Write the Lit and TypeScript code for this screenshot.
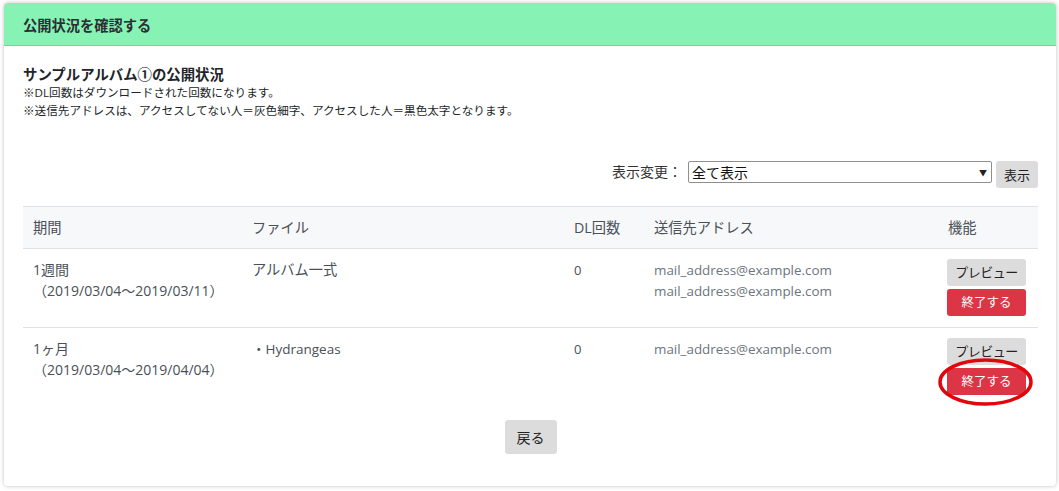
import { LitElement, html, css } from "lit";
import { customElement } from "lit/decorators.js";

@customElement("app-root")
export class AppRoot extends LitElement {
  static styles = css`
    :host {
      display: block;
      width: 1059px;
      height: 491px;
      overflow: hidden;
      background: #fff;
      font-family: "Open Sans", "Noto Sans CJK JP", sans-serif;
      font-size: 13px;
      color: #212529;
      box-sizing: border-box;
      padding: 3px 3px 4px 4px;
    }
    * { box-sizing: border-box; }
    .card {
      height: 483px;
      background: #fff;
      border-radius: 4px;
      box-shadow: 0 0 4px rgba(0, 0, 0, 0.25);
      position: relative;
      overflow: hidden;
    }
    .head {
      height: 43px;
      background: #86f3b5;
      border-bottom: 1px solid #6fd39b;
      padding: 0 19px;
      display: flex;
      align-items: center;
      font-size: 14.25px;
      font-weight: 700;
      color: #2b2f33;
    }
    .body { padding: 20px 18px 0 19px; }
    .title { font-size: 14.4px; font-weight: 700; line-height: 17px; color: #212529; }
    .note { font-size: 11.6px; line-height: 17px; color: #212529; padding-top: 1px; }
    .filter {
      margin-top: 42px;
      display: flex;
      justify-content: flex-end;
      align-items: flex-start;
      height: 45px;
    }
    .filter label { font-size: 14px; line-height: 22px; margin-right: 6px; color: #333; }
    .select {
      width: 304px;
      height: 22px;
      border: 1px solid #8f8f8f;
      border-radius: 2px;
      background: #fff;
      display: flex;
      align-items: center;
      justify-content: space-between;
      padding: 0 4px 0 3px;
      font-size: 14px;
      color: #111;
      margin-right: 4px;
    }
    .caret { font-size: 8px; color: #222; }
    .btn {
      display: flex;
      align-items: center;
      justify-content: center;
      background: #dcdcdc;
      border-radius: 3px;
      font-size: 13px;
      color: #222;
    }
    .show { width: 42px; height: 27px; }
    table {
      width: 1015px;
      border-collapse: collapse;
      table-layout: fixed;
      font-size: 14px;
    }
    th, td {
      padding: 10px 10px;
      text-align: left;
      vertical-align: top;
      font-weight: 400;
      line-height: 21px;
      color: #495057;
    }
    thead tr { background: #f7f8fa; border-top: 1px solid #dee2e6; border-bottom: 1px solid #dee2e6; }
    th { height: 42px; padding: 10px 10px 10px; font-size: 14.25px; }
    tbody tr { border-bottom: 1px solid #dee2e6; }
    tbody tr:last-child { border-bottom: 0; }
    tbody tr { height: 79px; }
    .file { font-size: 14.25px; }
    .hyd { font-size: 13.5px; padding-top: 11px; }
    .mail { color: #6c757d; font-size: 13.4px; padding-top: 11px; }
    .num { font-size: 13px; padding-top: 11px; }
    .ops { padding: 10px 0 0 9px; }
    .ops .btn { width: 79px; height: 27px; }
    .ops .btn + .btn { margin-top: 3px; }
    .prev { font-size: 13px; letter-spacing: -0.5px; }
    .end { background: #dc3545; color: #fff; font-size: 12.5px; }
    .foot { display: flex; justify-content: center; margin-top: 13px; }
    .back { width: 52px; height: 34px; font-size: 14px; }
    .ring {
      position: absolute;
      left: 934px;
      top: 355px;
      width: 95px;
      height: 48px;
      pointer-events: none;
    }
  `;

  render() {
    return html`
      <div class="card">
        <div class="head">公開状況を確認する</div>
        <div class="body">
          <div class="title">サンプルアルバム①の公開状況</div>
          <div class="note">※DL回数はダウンロードされた回数になります。</div>
          <div class="note">※送信先アドレスは、アクセスしてない人＝灰色細字、アクセスした人＝黒色太字となります。</div>
          <div class="filter">
            <label>表示変更：</label>
            <div class="select"><span>全て表示</span><span class="caret">▼</span></div>
            <div class="btn show">表示</div>
          </div>
          <table>
            <colgroup>
              <col style="width:219px" /><col style="width:322px" /><col style="width:80px" />
              <col style="width:294px" /><col style="width:100px" />
            </colgroup>
            <thead>
              <tr><th>期間</th><th>ファイル</th><th>DL回数</th><th>送信先アドレス</th><th>機能</th></tr>
            </thead>
            <tbody>
              <tr>
                <td>1週間<br />（2019/03/04～2019/03/11）</td>
                <td class="file">アルバム一式</td>
                <td class="num">0</td>
                <td class="mail">mail_address@example.com<br />mail_address@example.com</td>
                <td class="ops"><div class="btn prev">プレビュー</div><div class="btn end">終了する</div></td>
              </tr>
              <tr>
                <td>1ヶ月<br />（2019/03/04～2019/04/04）</td>
                <td class="hyd">・Hydrangeas</td>
                <td class="num">0</td>
                <td class="mail">mail_address@example.com</td>
                <td class="ops"><div class="btn prev">プレビュー</div><div class="btn end">終了する</div></td>
              </tr>
            </tbody>
          </table>
          <div class="foot"><div class="btn back">戻る</div></div>
        </div>
        <svg class="ring" viewBox="0 0 95 48">
          <ellipse cx="47.5" cy="24" rx="45.5" ry="22" fill="none" stroke="#e2060c" stroke-width="3.5" />
        </svg>
      </div>
    `;
  }
}
